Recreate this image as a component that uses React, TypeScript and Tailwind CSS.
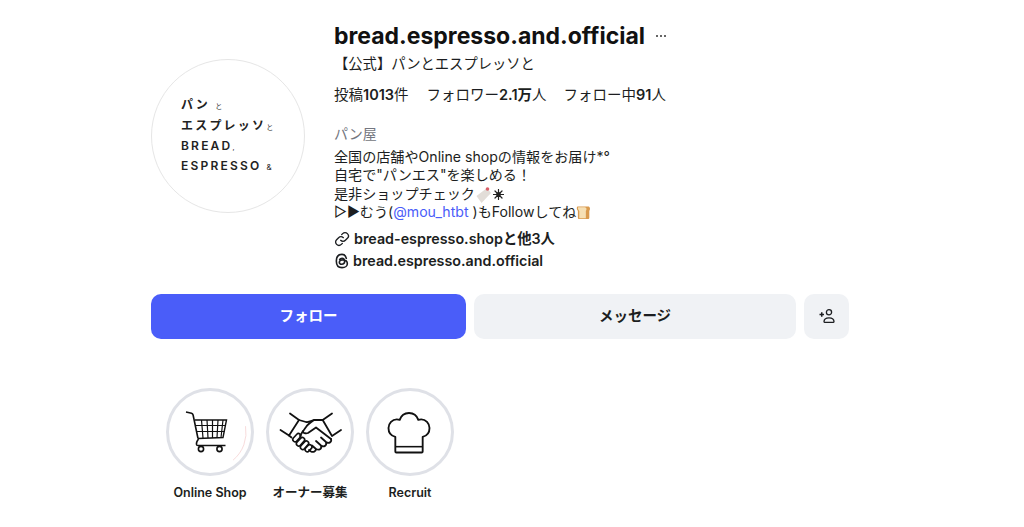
const font = { fontFamily: '"Inter", "Noto Sans CJK JP", sans-serif' }

function CartIcon() {
  return (
    <svg width="60" height="52" viewBox="0 0 60 52" fill="none" stroke="#111" strokeWidth="1.200" className="overflow-visible">
      <path d="M65.500 20.200A36 36 0 0 1 53.100 54.100" stroke="#f8dcdc" strokeWidth="1" />
      <path d="M6 6l5.500 1.200c1 .3 1.300.8 1.600 1.800L18 32.500" strokeWidth="1.600" />
      <path d="M15 14h31.500L43 31.500l-25 1" strokeWidth="1.400" />
      <path d="M21.500 14l1.500 18M27 14l1 18M32.500 14v18M38 14l-1 17.500M43 14l-2 17.500" />
      <path d="M16 19.500h29.500M17 25.500h27.500" />
      <path d="M18.500 33c-1.500 2-2.500 3.500-2 5.500 0 .5.500 1 1.500 1h27.500" strokeWidth="1.500" />
      <circle cx="21" cy="43" r="2.600" strokeWidth="1.600" />
      <circle cx="39.500" cy="43" r="2.600" strokeWidth="1.600" />
    </svg>
  )
}

function HandshakeIcon() {
  return (
    <svg width="70" height="52" viewBox="-1 0 70 52" fill="none" stroke="#111" strokeWidth="1.800" strokeLinejoin="round" strokeLinecap="round">
      <path d="M4.500 24l8.500 5.500L23 14l-9-6.500" />
      <path d="M65 24l-9 6L46.700 14l9.300-6.500" />
      <path d="M23 14l7 2c3 .5 5-1 8-2h8.700" />
      <path d="M38 14c-3 2-6 4-8 7-1.500 2-3 4-3 5 .5 1.500 3.500 1.500 5 1l8-5.500L55 33" />
      <path d="M13 29.500l2.500 2M27 25l-3 5" />
      <g strokeWidth="1.600">
        <rect x="16" y="29.500" width="9.500" height="4.500" rx="2.200" transform="rotate(-48 20.700 31.700)" />
        <rect x="19.500" y="33.500" width="10" height="4.500" rx="2.200" transform="rotate(-48 24.500 35.700)" />
        <rect x="23.500" y="37" width="10" height="4.500" rx="2.200" transform="rotate(-48 28.500 39.200)" />
        <rect x="28.500" y="40" width="8" height="4.500" rx="2.200" transform="rotate(-48 32.500 42.200)" />
      </g>
      <path d="M55 33c1 3-2 5-5 3l-5-4.500M50 36.500c1 3-2 5-5 3l-5-4.500M45 40c1 3-2 4.500-5 3l-4-3.500M40 43c0 2.500-3 3.500-5 2.500l-2-1.500" />
    </svg>
  )
}

function ChefIcon() {
  return (
    <svg width="44" height="42" viewBox="0 0 44 43" fill="none" stroke="#111" strokeWidth="1.900" strokeLinejoin="round" className="mt-[2px] -ml-[2px]">
      <path d="M9 41.500h26c.8 0 1-.5 1-1V25.500c4.500-1 7-4.500 7-9 0-5-4-9-8.500-9-1 0-2 .2-3 .6C30 3.500 26.500 1 22 1s-8 2.500-9.500 7.100c-1-.4-2-.6-3-.6C5 7.500 1 11.500 1 16.500c0 4.500 2.500 8 7 9v15c0 .5.200 1 1 1z" />
      <path d="M8 35.500h28" strokeWidth="1.600" />
    </svg>
  )
}

function Highlight({ label, children }: { label: string; children: React.ReactNode }) {
  return (
    <div className="flex w-[88px] flex-col items-center">
      <div className="flex h-[88px] w-[88px] items-center justify-center rounded-full border-[3px] border-[#dfe1e7] bg-white">
        {children}
      </div>
      <div className="mt-[9px] text-[12.500px] leading-[16px] font-semibold whitespace-nowrap text-[#1c1e21]">{label}</div>
    </div>
  )
}

export default function App() {
  return (
    <div className="h-[527px] w-[1024px] overflow-hidden bg-white pl-[151px] text-[#1c1e21]" style={font}>
      <div className="flex w-[698px] items-start pt-[18px]">
        {/* Avatar */}
        <div className="mt-[41px] flex h-[154px] w-[154px] shrink-0 flex-col justify-center rounded-full border border-[#e6e6e6] pl-[29px] text-[12px] font-semibold tracking-[2.200px] text-[#222]">
          <div className="h-[20.300px] leading-[20px]">パン <span className="text-[7px] font-normal">と</span></div>
          <div className="h-[20.300px] leading-[20px] whitespace-nowrap">エスプレッソ<span className="text-[7px] font-normal">と</span></div>
          <div className="h-[20.300px] leading-[20px]">BREAD<span className="text-[7px] font-normal">,</span></div>
          <div className="h-[20.300px] leading-[20px] whitespace-nowrap">ESPRESSO <span className="text-[8px] font-normal">&amp;</span></div>
        </div>

        {/* Profile info */}
        <div className="ml-[29px] flex flex-col">
          <div className="flex items-center">
            <h1 className="text-[23px] leading-[36px] font-bold text-[#111]">bread.espresso.and.official</h1>
            <span className="ml-[11px] flex gap-[2px]">
              <i className="h-[2px] w-[2px] rounded-full bg-[#333]" />
              <i className="h-[2px] w-[2px] rounded-full bg-[#333]" />
              <i className="h-[2px] w-[2px] rounded-full bg-[#333]" />
            </span>
          </div>
          <div className="text-[14.300px] leading-[20px]">【公式】パンとエスプレッソと</div>
          <div className="mt-[11px] flex gap-[17px] text-[14.500px] leading-[20px]">
            <span className="mr-[1px]">投稿<b className="font-semibold">1013</b>件</span>
            <span>フォロワー<b className="font-semibold">2.1万</b>人</span>
            <span>フォロー中<b className="font-semibold">91</b>人</span>
          </div>
          <div className="mt-[19px] text-[14px] leading-[20px] text-[#737680]">パン屋</div>
          <div className="mt-[4px] text-[14.100px] leading-[18.400px]">
            <div>全国の店舗やOnline shopの情報をお届け*°</div>
            <div>自宅で"パンエス"を楽しめる！</div>
            <div className="flex items-center">
              是非ショップチェック
              <svg width="17" height="17" viewBox="0 0 17 17"><path d="M1.500 10 12 2l4 5-9.500 10z" fill="#e2ddd8" /><circle cx="12.500" cy="3" r="1.800" fill="#d9606a" /></svg>
              <svg width="11" height="11" viewBox="0 0 11 11" stroke="#222" strokeWidth="1.200" strokeLinecap="round" className="ml-[1px]">
                <path d="M5.500.5v10M.5 5.500h10M2 2l7 7M9 2l-7 7" />
                <circle cx="5.500" cy="5.500" r="1.800" fill="#222" />
              </svg>
            </div>
            <div className="flex items-center">
              ▷▶むう(<span className="text-[#4a5df9]">@mou_htbt </span>&nbsp;)もFollowしてね
              <svg width="15" height="15" viewBox="0 0 16 16"><path d="M2 1.500h11c2 0 2.500 3 1.200 4.500v7.500c0 1-.5 1.500-1.500 1.500H3.500c-1 0-1.500-.5-1.500-1.500V6C.5 4.500.5 1.500 2 1.500z" fill="#d99a4e" /><path d="M2.500 2.500h7c1.800 0 2.300 2.500 1 3.800V14H3.500V6.300C2 5 1.500 2.500 2.500 2.500z" fill="#f6e0b5" /></svg>
            </div>
          </div>
          <div className="mt-[7px] flex items-center gap-[4px] text-[14.300px] leading-[20px] font-semibold">
            <svg width="16" height="16" viewBox="0 0 24 24" fill="none" stroke="#1c1e21" strokeWidth="2" strokeLinecap="round">
              <path d="M10 14a5 5 0 0 0 7.100 0l3-3a5 5 0 0 0-7.100-7.100l-1.500 1.500" />
              <path d="M14 10a5 5 0 0 0-7.100 0l-3 3a5 5 0 0 0 7.100 7.100l1.500-1.500" />
            </svg>
            bread-espresso.shopと他3人
          </div>
          <div className="mt-[2px] flex items-center gap-[3px] text-[14.300px] leading-[20px] font-semibold">
            <svg width="16" height="16" viewBox="0 0 24 24" fill="none" stroke="#1c1e21" strokeWidth="2.400" strokeLinecap="round">
              <path d="M18.500 8C17.500 4 15 2 12 2 6.500 2 3.500 6 3.500 12s3 10 8.500 10c5 0 8-3 8-6 0-3.500-3-5.500-7-5.500-3 0-5 1.300-5 3.300 0 1.800 1.500 3 3.500 3 3 0 4.500-2 4.500-4.500 0-2.500-1.500-4.300-4-4.300-1.500 0-2.800.6-3.500 1.700" />
            </svg>
            bread.espresso.and.official
          </div>
        </div>
      </div>

      {/* Buttons */}
      <div className="mt-[23px] flex w-[698px] gap-[8px] text-[14.500px] font-bold">
        <button className="h-[45px] w-[315px] rounded-[10px] bg-[#4a5df9] text-white">フォロー</button>
        <button className="h-[45px] w-[322px] rounded-[10px] bg-[#f0f2f5]">メッセージ</button>
        <button className="flex h-[45px] w-[45px] items-center justify-center rounded-[10px] bg-[#f0f2f5]">
          <svg width="16" height="14" viewBox="0 0 16 14" fill="none" stroke="#1c1e21" strokeWidth="1.300">
            <circle cx="10" cy="3.300" r="2.600" />
            <path d="M5 12.800c0-2.800 2-4 5-4s5 1.200 5 4c0 .3-.2.5-.5.500h-9c-.3 0-.5-.2-.5-.5z" />
            <path d="M.5 5.500h4.500M2.750 3.250v4.500" strokeWidth="1.500" />
          </svg>
        </button>
      </div>

      {/* Highlights */}
      <div className="mt-[49px] flex gap-[12px] pl-[15px]">
        <Highlight label="Online Shop"><CartIcon /></Highlight>
        <Highlight label="オーナー募集"><HandshakeIcon /></Highlight>
        <Highlight label="Recruit"><ChefIcon /></Highlight>
      </div>
    </div>
  )
}
